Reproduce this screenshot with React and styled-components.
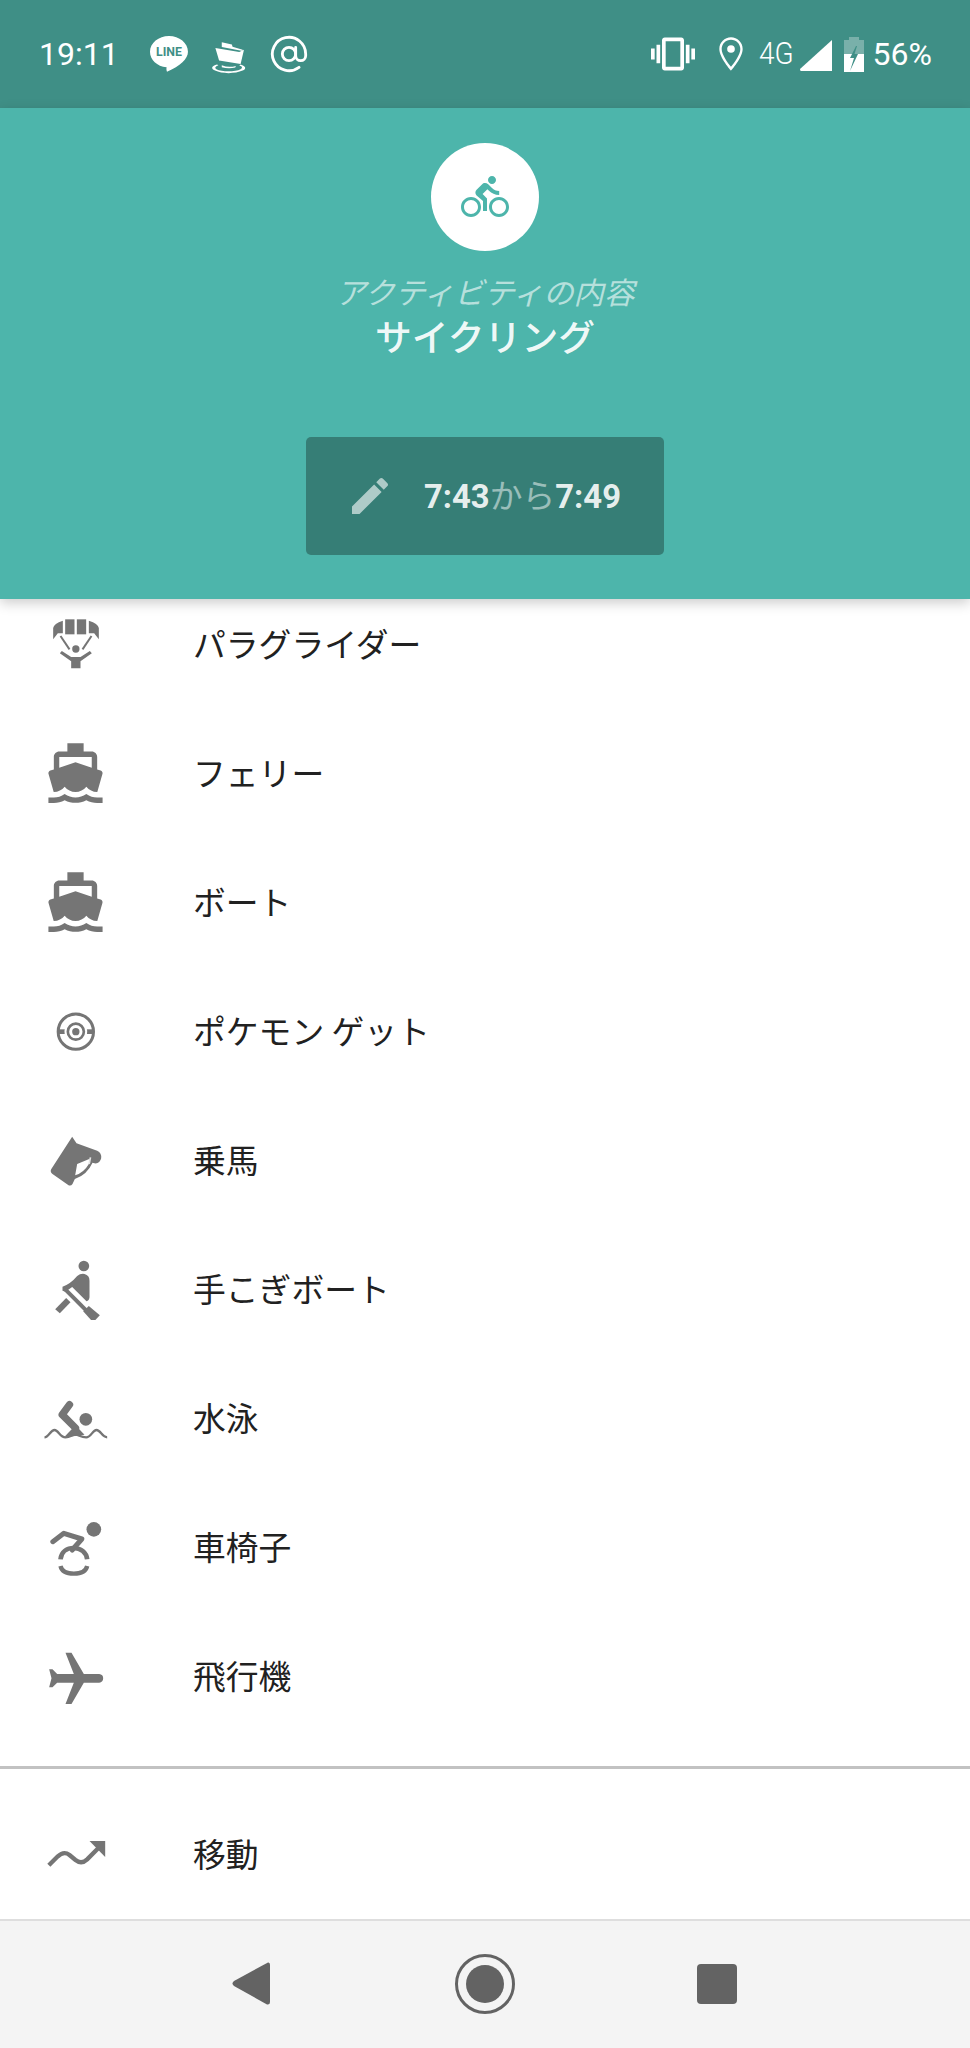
import React from "react";
import styled, { createGlobalStyle } from "styled-components";

const Global = createGlobalStyle`
  html, body { margin: 0; padding: 0; background: #fff; }
  body { font-family: "Noto Sans CJK JP", "Noto Sans", Roboto, sans-serif; }
`;

const Page = styled.div`
  width: 970px;
  height: 2048px;
  display: flex;
  flex-direction: column;
  overflow: hidden;
  background: #fff;
`;

const StatusBar = styled.div`
  height: 108px;
  flex: none;
  background: #3f8f86;
  display: flex;
  align-items: center;
  justify-content: space-between;
  padding: 0 38px 0 39px;
  color: #fff;
  font-family: Roboto, sans-serif;
`;

const StatusGroup = styled.div`
  display: flex;
  align-items: center;
`;

const StatusText = styled.span`
  font-size: ${(p) => p.$size || 32}px;
  line-height: 36px;
  font-weight: ${(p) => p.$weight || 400};
  margin-left: ${(p) => p.$ml || 0}px;
`;

const NarrowText = styled(StatusText)`
  display: inline-block;
  width: 34px;
  transform: scaleX(0.9);
  transform-origin: left center;
  white-space: nowrap;
`;

const StatusIcon = styled.svg`
  display: block;
  flex: none;
  fill: #fff;
  margin-left: ${(p) => p.$ml || 0}px;
  margin-top: ${(p) => p.$mt || 0}px;
`;

const OutlineStatusIcon = styled(StatusIcon)`
  fill: none;
  stroke: #fff;
  stroke-width: 1.7;
  stroke-linecap: round;
  stroke-linejoin: round;
`;

const Header = styled.header`
  height: 491px;
  flex: none;
  box-sizing: border-box;
  padding-top: 35px;
  background: #4db5ab;
  display: flex;
  flex-direction: column;
  align-items: center;
  position: relative;
  z-index: 2;
  box-shadow: 0 4px 12px rgba(0, 0, 0, 0.2);
`;

const ActivityBadge = styled.div`
  width: 108px;
  height: 108px;
  border-radius: 50%;
  background: #fff;
  display: flex;
  align-items: center;
  justify-content: center;
`;

const BikeIcon = styled.svg`
  width: 48px;
  height: 48px;
  fill: #4db5ab;
`;

const Subtitle = styled.div`
  margin-top: 18px;
  font-size: 30.4px;
  line-height: 44px;
  font-style: italic;
  color: rgba(255, 255, 255, 0.6);
`;

const Title = styled.div`
  font-size: 36.8px;
  line-height: 44px;
  font-weight: 500;
  color: rgba(255, 255, 255, 0.93);
`;

const TimeButton = styled.div`
  margin-top: 80px;
  width: 358px;
  height: 118px;
  box-sizing: border-box;
  padding: 0 0 2px 40px;
  border-radius: 5px;
  background: #367e76;
  display: flex;
  align-items: center;
  gap: 30px;
`;

const PencilIcon = styled.svg`
  width: 48px;
  height: 48px;
  flex: none;
  margin-top: 2px;
  fill: rgba(255, 255, 255, 0.6);
`;

const TimeRange = styled.div`
  font-family: Roboto, "Noto Sans CJK JP", sans-serif;
  font-size: 32.8px;
  line-height: 44px;
  font-weight: 700;
  color: rgba(255, 255, 255, 0.9);
  white-space: nowrap;
`;

const Joiner = styled.span`
  font-weight: 400;
  font-family: "Noto Sans CJK JP", sans-serif;
  color: rgba(255, 255, 255, 0.5);
`;

const ListViewport = styled.main`
  flex: 1;
  min-height: 0;
  overflow: hidden;
  background: #fff;
`;

const RowList = styled.ul`
  list-style: none;
  margin: -21px 0 0;
  padding: 0;
`;

const Row = styled.li`
  height: 129px;
  display: flex;
  align-items: center;
  padding-left: 10px;
`;

const IconSlot = styled.div`
  width: 130px;
  flex: none;
  display: flex;
  justify-content: center;
`;

const RowIcon = styled.svg`
  display: block;
  width: 65px;
  height: 65px;
  fill: #757575;
  stroke: none;
`;

const RowLabel = styled.span`
  margin-left: 53px;
  font-size: 32.8px;
  line-height: 44px;
  color: #212121;
  white-space: nowrap;
`;

const PinnedSection = styled.section`
  flex: none;
  height: 153px;
  box-sizing: border-box;
  border-top: 3px solid #c2c2c2;
  padding-top: 19px;
  background: #fff;
`;

const NavBar = styled.nav`
  flex: none;
  height: 129px;
  box-sizing: border-box;
  border-top: 2px solid #dedede;
  background: #f4f4f4;
  padding: 0 0 2px 134px;
  display: flex;
  align-items: center;
`;

const NavSlot = styled.div`
  width: ${(p) => p.$w}px;
  display: flex;
  justify-content: center;
`;

const HomeRing = styled.div`
  width: 60px;
  height: 60px;
  box-sizing: border-box;
  border: 3px solid #636363;
  border-radius: 50%;
  display: flex;
  align-items: center;
  justify-content: center;
`;

const HomeDot = styled.div`
  width: 38px;
  height: 38px;
  border-radius: 50%;
  background: #636363;
`;

const RecentSquare = styled.div`
  width: 40px;
  height: 40px;
  border-radius: 4px;
  background: #636363;
`;

const Paraglider = () => (
  <RowIcon viewBox="67.5 30 195 195">
    <path d="M98 118V84Q100 70 127 62V100H112Z" />
    <rect x="134" y="58" width="28" height="45" />
    <rect x="169" y="58" width="28" height="45" />
    <path d="M235 118V84Q233 70 205 62V100H221Z" />
    <path d="M120 108l27 40" stroke="#757575" strokeWidth="6" fill="none" />
    <path d="M213 108l-27 40" stroke="#757575" strokeWidth="6" fill="none" />
    <circle cx="166" cy="147" r="11" />
    <path d="M118 160l6-7 28 18h28l28-18 6 7-34 24v21h-28v-21z" />
  </RowIcon>
);

const Ship = () => (
  <RowIcon viewBox="0 -0.6 24 24">
    <path d="M20 21c-1.39 0-2.78-.47-4-1.32-2.44 1.71-5.56 1.71-8 0C6.78 20.53 5.39 21 4 21H2v2h2c1.38 0 2.74-.35 4-.99 2.52 1.29 5.48 1.29 8 0 1.26.65 2.62.99 4 .99h2v-2h-2zM3.95 19H4c1.6 0 3.02-.88 4-2 .98 1.12 2.4 2 4 2s3.02-.88 4-2c.98 1.12 2.4 2 4 2h.05l1.89-6.68c.08-.26.06-.54-.06-.78s-.34-.42-.6-.5L20 10.62V6c0-1.1-.9-2-2-2h-3V1H9v3H6c-1.1 0-2 .9-2 2v4.62l-1.29.42c-.26.08-.48.26-.6.5s-.15.52-.06.78L3.95 19zM6 6h12v3.97L12 8 6 9.97V6z" />
  </RowIcon>
);

const Pokeball = () => (
  <RowIcon viewBox="67.5 51 195 195">
    <circle cx="166" cy="155" r="53" fill="none" stroke="#757575" strokeWidth="9" />
    <rect x="113" y="148" width="106" height="14" />
    <circle cx="166" cy="155" r="34" fill="#fff" />
    <circle cx="166" cy="155" r="24" fill="none" stroke="#757575" strokeWidth="8" />
    <circle cx="166" cy="155" r="11" />
  </RowIcon>
);

const Horse = () => (
  <RowIcon viewBox="67.5 438 195 195">
    <path d="M155 470L168 490L230 512Q244 518 242 535Q238 552 222 550L216 548Q200 584 163 597L156 612Q150 620 142 614L96 582Q88 576 92 568Z M170 552L164 586Q190 578 205 552L208 536Z" fillRule="evenodd" />
    <path d="M210 532l-4 20" stroke="#e4e4e4" strokeWidth="5" fill="none" />
  </RowIcon>
);

const Rowing = () => (
  <RowIcon viewBox="67.5 45 195 195">
    <circle cx="190" cy="78" r="16" />
    <path d="M126 140Q150 132 170 108Q180 100 192 102Q207 106 207 122V172Q206 182 198 184L155 141L135 155L126 152Z" />
    <path d="M132 146L200 214" stroke="#757575" strokeWidth="12" fill="none" />
    <path d="M205 198L238 226L218 247L188 214Z" />
    <path d="M104 208L137 174L150 187L118 220Z" />
  </RowIcon>
);

const Swimmer = () => (
  <RowIcon viewBox="67.5 -18 195 195">
    <circle cx="196" cy="88" r="19" />
    <path d="M147 44L125 74L165 114" stroke="#757575" strokeWidth="22" strokeLinecap="round" strokeLinejoin="round" fill="none" />
    <path d="M132 140L165 106L192 134L165 138Z" />
    <path d="M72 142C85 142 90 120 102 120C114 120 118 142 135 142C150 142 155 134 165 134C175 134 180 142 197 142C212 142 216 120 228 120C240 120 245 142 260 142" stroke="#757575" strokeWidth="7" fill="none" />
  </RowIcon>
);

const Wheelchair = () => (
  <RowIcon viewBox="67.5 369 195 195">
    <circle cx="220" cy="418" r="22" />
    <path d="M97 455L130 430L184 447L155 480" stroke="#757575" strokeWidth="15" strokeLinecap="round" strokeLinejoin="round" fill="none" />
    <path d="M120 508C122 485 140 474 160 474C180 474 198 487 200 508" stroke="#757575" strokeWidth="14" fill="none" />
    <path d="M120 528C124 547 142 551 160 551C178 551 196 547 200 528" stroke="#757575" strokeWidth="13" fill="none" />
  </RowIcon>
);

const Plane = () => (
  <RowIcon viewBox="67.5 756 195 195">
    <path d="M135 788H153L190 852H236Q248 853 248 865Q248 877 236 878H190L153 942H135L160 878H110L96 892H86L93 865L86 838H96L110 852H160Z" />
  </RowIcon>
);

const Trending = () => (
  <RowIcon viewBox="127.5 240 195 195">
    <path d="M145 376L172 349Q190 332 207 345L225 360Q243 374 260 358L296 322" stroke="#757575" strokeWidth="13" fill="none" />
    <path d="M267 303H314V351Z" />
  </RowIcon>
);

const rows = [
  ["パラグライダー", Paraglider],
  ["フェリー", Ship],
  ["ボート", Ship],
  ["ポケモン ゲット", Pokeball],
  ["乗馬", Horse],
  ["手こぎボート", Rowing],
  ["水泳", Swimmer],
  ["車椅子", Wheelchair],
  ["飛行機", Plane],
];

const ActivityRow = ({ label, icon: Icon }) => (
  <Row>
    <IconSlot>
      <Icon />
    </IconSlot>
    <RowLabel>{label}</RowLabel>
  </Row>
);

export default function App() {
  return (
    <Page>
      <Global />
      <StatusBar>
        <StatusGroup>
          <StatusText>19:11</StatusText>
          <StatusIcon $ml={31} width="38.3" height="35.7" viewBox="447 108 115 107">
            <path d="M504 108C535 108 561 129 561 155C561 176 538 198 498 215C495 208 497 202 497 202C468 199 447 179 447 155C447 129 473 108 504 108Z" />
            <text x="504" y="168" textAnchor="middle" fontFamily="Roboto, sans-serif" fontWeight="700" fontSize="37" fill="#3f8f86">LINE</text>
          </StatusIcon>
          <StatusIcon $ml={22} $mt={6} width="37" height="33" viewBox="625 120 110 98">
            <path d="M660 124L690 130L692 137L722 146L722 150L660 138Z" />
            <path d="M641 141L712 153L726 146L716 188L652 178Z" />
            <path fillRule="evenodd" d="M646 190L650 192C640 196 638 200 644 204C660 212 700 212 716 204C722 200 722 196 712 193L716 190C732 195 734 203 722 208C700 218 660 218 640 208C626 202 630 194 646 190Z" />
            <path d="M660 192Q680 200 702 194L700 199Q680 204 660 198Z" />
          </StatusIcon>
          <OutlineStatusIcon $ml={22} width="40" height="40" viewBox="0 0 24 24">
            <circle cx="12" cy="12" r="4" />
            <path d="M16 8v5a3 3 0 0 0 6 0v-1a10 10 0 1 0-4 8" />
          </OutlineStatusIcon>
        </StatusGroup>
        <StatusGroup>
          <StatusIcon width="44" height="44" viewBox="0 0 24 24">
            <path d="M0 15h2V9H0v6zm3 2h2V7H3v10zm19-8v6h2V9h-2zm-3 8h2V7h-2v10zM16.5 3h-9C6.67 3 6 3.67 6 4.5v15c0 .83.67 1.5 1.5 1.5h9c.83 0 1.5-.67 1.5-1.5v-15c0-.83-.67-1.5-1.5-1.5zM16 19H8V5h8v14z" />
          </StatusIcon>
          <StatusIcon $ml={16} width="40" height="40" viewBox="0 0 24 24">
            <path d="M12 2C8.13 2 5 5.13 5 9c0 5.25 7 13 7 13s7-7.75 7-13c0-3.87-3.13-7-7-7zM6.4 9c0-3.1 2.5-5.6 5.6-5.6s5.6 2.5 5.6 5.6c0 3.3-3.4 8-5.6 10.7C9.8 17 6.4 12.3 6.4 9z" />
            <circle cx="12" cy="9" r="2.3" />
          </StatusIcon>
          <NarrowText $ml={8} $size={31} $weight={300}>4G</NarrowText>
          <StatusIcon $ml={7} $mt={2} width="32" height="31" viewBox="0 0 32 31">
            <path d="M32 0V31H1Q0 31 0 29Z" />
          </StatusIcon>
          <StatusIcon $ml={12} width="20" height="35" viewBox="0 0 20 35">
            <path d="M5 0H15V3H20V17H0V3H5Z" fillOpacity="0.3" />
            <path d="M0 17H20V35H0Z" />
            <path d="M12 9L6 21H10L6 34L14 17H10.5L13 9Z" fill="#3f8f86" />
          </StatusIcon>
          <StatusText $ml={9}>56%</StatusText>
        </StatusGroup>
      </StatusBar>

      <Header>
        <ActivityBadge>
          <BikeIcon viewBox="0 0 24 24">
            <path d="M15.5 5.5c1.1 0 2-.9 2-2s-.9-2-2-2-2 .9-2 2 .9 2 2 2zM5 12c-2.8 0-5 2.2-5 5s2.2 5 5 5 5-2.2 5-5-2.2-5-5-5zm0 8.5c-1.9 0-3.5-1.6-3.5-3.5s1.6-3.5 3.5-3.5 3.5 1.6 3.5 3.5-1.6 3.5-3.5 3.5zm5.8-10l2.4-2.4.8.8c1.3 1.3 3 2.1 5.1 2.1V9c-1.5 0-2.7-.6-3.6-1.5l-1.9-1.9c-.5-.4-1-.6-1.6-.6s-1.1.2-1.4.6L7.8 8.4c-.4.4-.6.9-.6 1.4 0 .6.2 1.1.6 1.4L11 14v5h2v-6.2l-2.2-2.3zM19 12c-2.8 0-5 2.2-5 5s2.2 5 5 5 5-2.2 5-5-2.2-5-5-5zm0 8.5c-1.9 0-3.5-1.6-3.5-3.5s1.6-3.5 3.5-3.5 3.5 1.6 3.5 3.5-1.6 3.5-3.5 3.5z" />
          </BikeIcon>
        </ActivityBadge>
        <Subtitle>アクティビティの内容</Subtitle>
        <Title>サイクリング</Title>
        <TimeButton>
          <PencilIcon viewBox="0 0 24 24">
            <path d="M3 17.25V21h3.75L17.81 9.94l-3.75-3.75L3 17.25zM20.71 7.04c.39-.39.39-1.02 0-1.41l-2.34-2.34c-.39-.39-1.02-.39-1.41 0l-1.83 1.83 3.75 3.75 1.83-1.83z" />
          </PencilIcon>
          <TimeRange>
            7:43<Joiner>から</Joiner>7:49
          </TimeRange>
        </TimeButton>
      </Header>

      <ListViewport>
        <RowList>
          {rows.map(([label, icon]) => (
            <ActivityRow key={label} label={label} icon={icon} />
          ))}
        </RowList>
      </ListViewport>

      <PinnedSection>
        <ActivityRow label="移動" icon={Trending} />
      </PinnedSection>

      <NavBar>
        <NavSlot $w={234}>
          <svg width="40" height="45" viewBox="0 0 40 45">
            <path d="M37 1.5Q39 1 39 4V41Q39 44 36 43.5L3 25Q0 22.5 3 20Z" fill="#636363" />
          </svg>
        </NavSlot>
        <NavSlot $w={234}>
          <HomeRing>
            <HomeDot />
          </HomeRing>
        </NavSlot>
        <NavSlot $w={230}>
          <RecentSquare />
        </NavSlot>
      </NavBar>
    </Page>
  );
}
